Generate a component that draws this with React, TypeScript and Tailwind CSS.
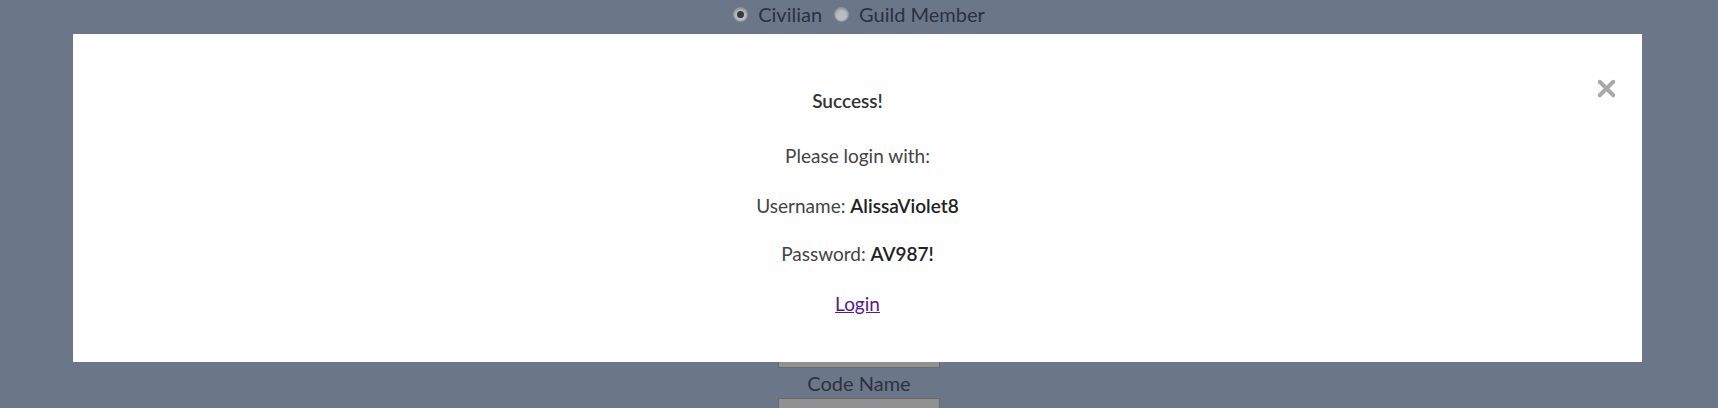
import { X } from "lucide-react";

const FONT = "font-['Lato','Open_Sans',sans-serif]";

function Radio({ checked }: { checked: boolean }) {
  return (
    <span className="flex h-[15px] w-[15px] items-center justify-center rounded-full border border-[#8a8f98] bg-[#b9bcc0] shadow-[inset_0_1px_2px_rgba(0,0,0,0.25)]">
      {checked && <span className="block h-[7px] w-[7px] rounded-full bg-[#3a3a3a]" />}
    </span>
  );
}

export default function App() {
  return (
    <div className={`relative h-[408px] w-full overflow-hidden bg-[#6b7688] ${FONT}`}>
      {/* Page behind the overlay */}
      <div className="flex flex-col items-center">
        <div className="flex h-[28px] items-center gap-[10px] text-[20px] text-[#2b3240]">
          <Radio checked />
          <span className="mr-[2px]">Civilian</span>
          <Radio checked={false} />
          <span>Guild Member</span>
        </div>
        <div className="mt-[310px] h-[30px] w-[162px] border border-[#6a6a6a] bg-[#8f9193]" />
        <div className="flex h-[30px] items-center text-[20px] text-[#2b3240]">Code Name</div>
        <div className="h-[30px] w-[162px] border border-[#6a6a6a] bg-[#8f9193]" />
      </div>

      {/* Success modal */}
      <div className="absolute left-[73px] right-[76px] top-[34px] h-[328px] bg-[#fefefe]">
        <button
          type="button"
          aria-label="Close"
          className="absolute right-[22px] top-[41px] text-[#a8a8a8]"
        >
          <X size={27} strokeWidth={3.5} />
        </button>
        <div className="flex flex-col items-center pt-[53px] text-[19px] text-[#444]">
          <p className="h-[24px] pr-[20px] font-semibold text-[#333]">Success!</p>
          <p className="mt-[31px] h-[24px]">Please login with:</p>
          <p className="mt-[26px] h-[24px]">
            Username: <span className="font-semibold text-[#222]">AlissaViolet8</span>
          </p>
          <p className="mt-[24px] h-[24px]">
            Password: <span className="font-semibold text-[#222]">AV987!</span>
          </p>
          <a href="#" className="mt-[26px] h-[24px] text-[#551a8b] underline">
            Login
          </a>
        </div>
      </div>
    </div>
  );
}
